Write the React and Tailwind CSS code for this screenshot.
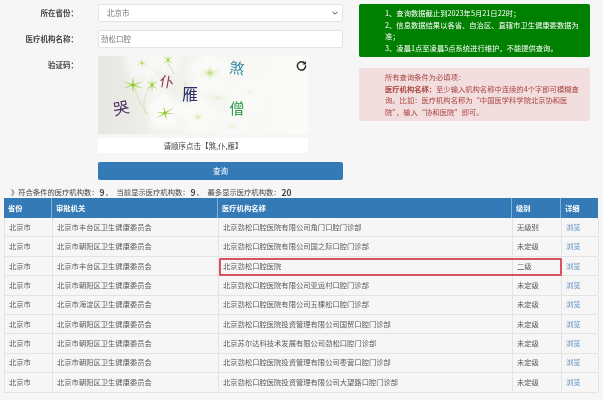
import React from "react";

const C = "\uFF1A";
const K = "\uFF0C";
const S = "\uFF1B";
const LQ = "\u201C";
const RQ = "\u201D";

const rows = [
  ["北京市丰台区卫生健康委员会", "北京劲松口腔医院有限公司角门口腔门诊部", "无级别"],
  ["北京市朝阳区卫生健康委员会", "北京劲松口腔医院有限公司国之际口腔门诊部", "未定级"],
  ["北京市丰台区卫生健康委员会", "北京劲松口腔医院", "二级", true],
  ["北京市朝阳区卫生健康委员会", "北京劲松口腔医院有限公司亚运村口腔门诊部", "未定级"],
  ["北京市海淀区卫生健康委员会", "北京劲松口腔医院有限公司五棵松口腔门诊部", "未定级"],
  ["北京市朝阳区卫生健康委员会", "北京劲松口腔医院投资管理有限公司国贸口腔门诊部", "未定级"],
  ["北京市朝阳区卫生健康委员会", "北京苏尔达科技术发展有限公司劲松口腔门诊部", "未定级"],
  ["北京市朝阳区卫生健康委员会", "北京劲松口腔医院投资管理有限公司枣营口腔门诊部", "未定级"],
  ["北京市朝阳区卫生健康委员会", "北京劲松口腔医院投资管理有限公司大望路口腔门诊部", "未定级"],
];

const cols = "grid grid-cols-[48px_166px_294px_49px_37px]";

function Petals({ x, y, s = 1, o = 1 }) {
  return (
    <g transform={`translate(${x} ${y}) scale(${s})`} opacity={o}>
      {[0, 72, 144, 216, 288].map((r) => (
        <ellipse key={r} cx="0" cy="-10" rx="9" ry="11" fill="#fbfbf9" transform={`rotate(${r})`} />
      ))}
    </g>
  );
}

function Star({ x, y, sx = 1, sy = 0.6, o = 1, rot = 0 }) {
  return (
    <g transform={`translate(${x} ${y}) rotate(${rot}) scale(${sx} ${sy})`} opacity={o}>
      {[0, 60, 120, 180, 240, 300].map((r) => (
        <path key={r} d="M-1 0L0 -12L1 0Z" fill="#a3d13f" transform={`rotate(${r})`} />
      ))}
      <circle r="2" fill="#93c932" />
    </g>
  );
}

function Captcha() {
  const chars = [
    ["煞", 139, 11, "#3a8ba6", 8, "text-[15px]"],
    ["仆", 69, 25, "#8c3148", 10, "text-[14px]"],
    ["雁", 92, 37, "#2c2f66", 0, "text-[16px]"],
    ["哭", 23, 51, "#4a2a5e", -12, "text-[16px]"],
    ["僧", 139, 51, "#2f9a4a", 0, "text-[15px]"],
  ];
  return (
    <div className="relative h-[78px] w-[210px] overflow-hidden bg-[#f4f5f0]">
      <svg viewBox="0 0 210 78" className="absolute inset-0 h-full w-full">
        <defs>
          <linearGradient id="fade" x1="0" x2="1" y1="0" y2="0">
            <stop offset="0" stopColor="#e6e7e2" />
            <stop offset="0.3" stopColor="#eff0ea" />
            <stop offset="0.7" stopColor="#f7f8f3" />
            <stop offset="1" stopColor="#fbfbf8" />
          </linearGradient>
          <filter id="b1"><feGaussianBlur stdDeviation="1" /></filter>
          <filter id="b2"><feGaussianBlur stdDeviation="3" /></filter>
          <filter id="b3"><feGaussianBlur stdDeviation="0.35" /></filter>
        </defs>
        <rect width="210" height="78" fill="url(#fade)" />
        <g filter="url(#b2)">
          <Petals x={112} y={17} s={1.1} o={0.9} />
          <Petals x={150} y={40} s={1} o={0.8} />
          <Petals x={100} y={60} s={1} o={0.9} />
          <Petals x={134} y={70} s={0.9} o={0.8} />
          <Petals x={185} y={25} s={0.9} o={0.6} />
        </g>
        <g filter="url(#b2)">
          <Petals x={44} y={7} s={0.9} o={0.8} />
          <Petals x={70} y={4} s={0.7} o={0.8} />
          <Petals x={67} y={57} s={0.95} o={0.95} />
          <Petals x={54} y={32} s={0.7} o={0.6} />
        </g>
        <g fill="none" stroke="#c6dca0" strokeWidth="0.7" strokeLinecap="round">
          <path d="M37 32C39 42 43 50 50 58" />
          <path d="M53 31C45 40 44 50 48 58" />
          <path d="M71 8L76 18" />
          <path d="M88 26L85 38" />
        </g>
        <g filter="url(#b3)">
          <Star x={35} y={29} sx={1.1} sy={0.65} />
          <Star x={54} y={29} sx={0.55} sy={0.75} o={0.9} />
          <Star x={67} y={57} sx={1} sy={0.6} rot={-12} />
          <Star x={44} y={7} sx={0.6} sy={0.4} o={0.75} />
          <Star x={70} y={4} sx={0.5} sy={0.7} o={0.85} />
        </g>
        <g filter="url(#b1)">
          <Star x={112} y={17} sx={1} sy={0.6} o={0.75} />
          <Star x={100} y={61} sx={0.6} sy={0.35} o={0.6} />
          <Star x={120} y={42} sx={0.5} sy={0.3} o={0.4} />
          <Star x={134} y={70} sx={0.6} sy={0.3} o={0.3} />
          <Star x={152} y={36} sx={0.6} sy={0.4} o={0.25} />
        </g>
      </svg>
      {chars.map(([c, l, t, color, rot, size]) => (
        <span
          key={c}
          className={`absolute leading-none ${size}`}
          style={{ left: l, top: t, color, transform: `translate(-50%,-50%) rotate(${rot}deg)` }}
        >
          {c}
        </span>
      ))}
      <svg viewBox="0 0 24 24" className="absolute left-[198px] top-[4px] h-[11px] w-[11px]" fill="none" stroke="#222" strokeWidth="3.2" strokeLinecap="round">
        <path d="M19.5 8A9 9 0 1 0 21 13" />
        <path d="M21 3v6h-6" fill="#222" strokeWidth="1" />
      </svg>
    </div>
  );
}

export default function App() {
  return (
    <div
      className="h-[400px] w-[603px] overflow-hidden bg-[#f6f6f6] text-[#5a5a5a] blur-[0.35px]"
      style={{ fontFamily: '"Noto Sans CJK SC", "Liberation Sans", sans-serif' }}
    >
      <div className="flex h-[186px] items-start pt-1">
        <div className="flex w-[359px] flex-col text-[7.5px]">
          <div className="flex h-[18px] items-center">
            <div className="w-[78px] text-right font-bold text-[#444]">所在省份{C}</div>
            <div className="ml-5 flex h-[18px] w-[245px] items-center justify-between rounded-[2px] border border-[#e4e4e4] bg-white pl-2 pr-1 text-[#777]">
              <span>北京市</span>
              <svg viewBox="0 0 10 6" className="h-[4px] w-[6px]" fill="none" stroke="#444" strokeWidth="1.6">
                <path d="M1 1l4 4 4-4" />
              </svg>
            </div>
          </div>
          <div className="mt-2 flex h-[18px] items-center">
            <div className="w-[78px] text-right font-bold text-[#444]">医疗机构名称{C}</div>
            <div className="ml-5 flex h-[18px] w-[245px] items-center rounded-[2px] border border-[#e4e4e4] bg-white pl-[2px] text-[#777]">
              劲松口腔
            </div>
          </div>
          <div className="mt-2 flex items-start">
            <div className="mt-[3px] w-[78px] text-right font-bold text-[#444]">验证码{C}</div>
            <div className="ml-5 flex flex-col">
              <Captcha />
              <div className="mt-1 flex h-[15px] w-[210px] items-center justify-center rounded-[2px] bg-white text-[#444]">
                请顺序点击【煞,仆,雁】
              </div>
              <div className="mt-[9px] flex h-[18px] w-[245px] items-center justify-center rounded-[2px] bg-[#337ab7] text-white">
                查询
              </div>
            </div>
          </div>
        </div>
        <div className="flex w-[231px] flex-col gap-[11px] text-[7.3px] leading-[11.5px]">
          <div className="h-[53px] rounded-[2px] bg-[#008000] pl-[26px] pr-[7px] pt-[4px] text-white">
            <div>1、查询数据截止到2023年5月21日22时{S}</div>
            <div>2、信息数据结果以各省、自治区、直辖市卫生健康委数据为准{S}</div>
            <div>3、凌晨1点至凌晨5点系统进行维护{K}不能提供查询。</div>
          </div>
          <div className="h-[53px] rounded-[2px] bg-[#f2dede] pl-[26px] pr-[7px] pt-[4px] text-[#a94442]">
            <div>所有查询条件为必填项{C}</div>
            <div>
              <b>医疗机构名称{C}</b>
              至少输入机构名称中连续的4个字即可模糊查询。比如{C}医疗机构名称为{LQ}中国医学科学院北京协和医院{RQ}{K}输入{LQ}协和医院{RQ}即可。
            </div>
          </div>
        </div>
      </div>

      <div className="flex h-[12px] items-center whitespace-pre pl-[11px] text-[7.3px] text-[#444]">
        <span>》符合条件的医疗机构数{C}</span>
        <b className="ml-[1px] text-[8.5px]">9</b>
        <span className="ml-[1px] w-[11px]">、</span>
        <span>当前显示医疗机构数{C}</span>
        <b className="ml-[1px] text-[8.5px]">9</b>
        <span className="ml-[1px] w-[11px]">、</span>
        <span>最多显示医疗机构数{C}</span>
        <b className="ml-[1px] text-[8.5px]">20</b>
      </div>

      <div className="relative ml-1 w-[594px] text-[7.3px]">
        <div className={`${cols} h-[20px] bg-[#337ab7] font-bold text-white`}>
          {["省份", "审批机关", "医疗机构名称", "级别", "详细"].map((h) => (
            <div key={h} className="flex items-center border-r border-[#7fb0d8] pl-1 last:border-r-0">
              {h}
            </div>
          ))}
        </div>
        {rows.map(([org, name, level, mark], i) => (
          <div key={i} className={`${cols} relative h-[19.4px] border-b border-l border-[#e3e3e3]`}>
            <div className="flex items-center border-r border-[#e3e3e3] pl-1">北京市</div>
            <div className="flex items-center border-r border-[#e3e3e3] pl-1">{org}</div>
            <div className="flex items-center border-r border-[#e3e3e3] pl-1">{name}</div>
            <div className="flex items-center border-r border-[#e3e3e3] pl-1">{level}</div>
            <div className="flex items-center border-r border-[#e3e3e3] pl-1 text-[#5c8fc0]">浏览</div>
            {mark && (
              <div className="absolute left-[214px] top-[1px] h-[18px] w-[343px] rounded-[1px] border-2 border-[#d9535e]" />
            )}
          </div>
        ))}
      </div>
    </div>
  );
}
